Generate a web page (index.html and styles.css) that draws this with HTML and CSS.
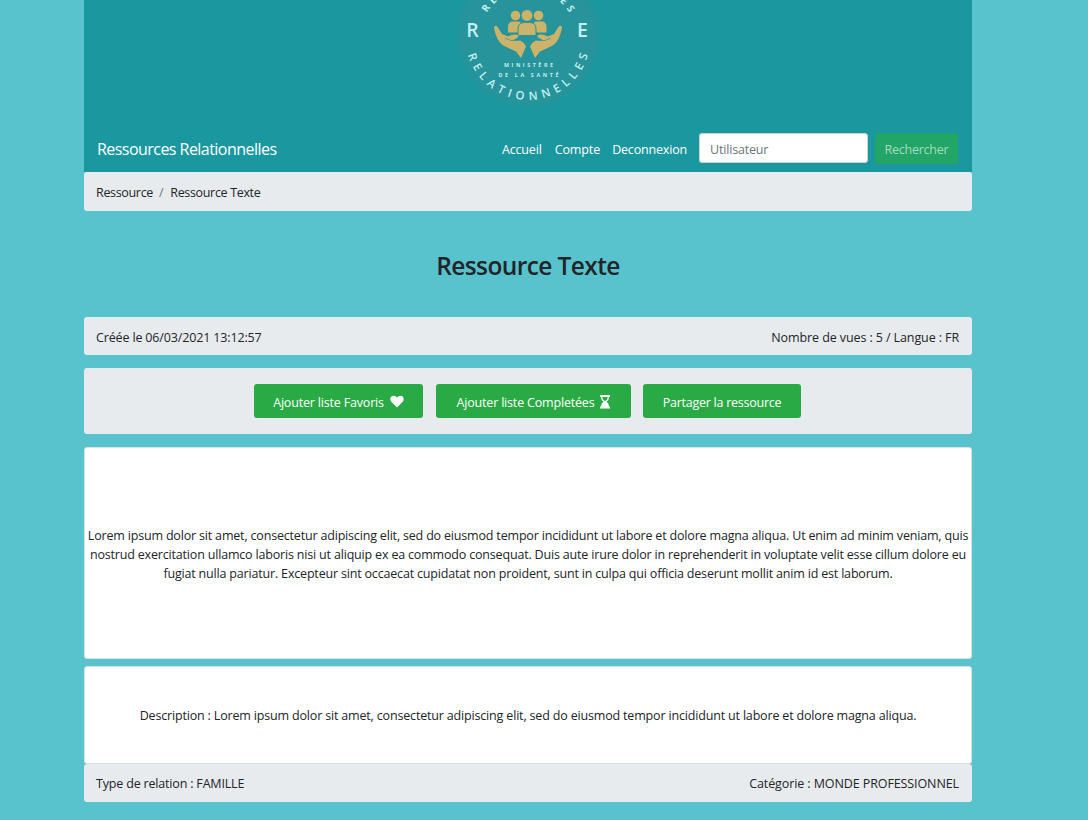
FILE: index.html
```html
<!DOCTYPE html>
<html lang="fr">
<head>
<meta charset="utf-8">
<title>Ressources Relationnelles</title>
<link rel="stylesheet" href="styles.css">
</head>
<body>
<div class="container">
  <header class="header">
    <svg class="logo" viewBox="448 0 160 125" width="160" height="125">
      <defs>
        <path id="arc-top" d="M480 37.5A48 48 0 0 1 576 37.5"/>
        <path id="arc-bottom" d="M465.5 37.5A62.5 62.5 0 0 0 590.5 37.5"/>
        <radialGradient id="disc"><stop offset=".9" stop-color="#27939a"/><stop offset="1" stop-color="#27939a" stop-opacity="0"/></radialGradient>
      </defs>
      <circle cx="528" cy="36" r="74" fill="url(#disc)"/>
      <g class="logo-text">
        <text class="ring ring-top"><textPath href="#arc-top" startOffset="50%" textLength="99">RESSOURCES</textPath></text>
        <text class="ring"><textPath href="#arc-bottom" startOffset="50%" textLength="161">RELATIONNELLES</textPath></text>
        <text class="initial" x="472.5" y="37">R</text>
        <text class="initial" x="582.5" y="37">E</text>
        <text class="small" x="528.5" y="67" textLength="49">MINISTÈRE</text>
        <text class="small" x="528.5" y="77" textLength="60">DE LA SANTÉ</text>
      </g>
      <g fill="#cbb469">
        <circle cx="515.5" cy="15.500" r="4.800"/>
        <circle cx="538.500" cy="15.500" r="4.800"/>
        <path d="M508 32.500V27q0-5.500 5-5.500h5q3 0 3 3l-3 8zM546.500 32.500V27q0-5.500-5-5.500h-5q-3 0-3 3l3 8z"/>
        <g stroke="#27939a"><circle cx="527" cy="15.500" r="5.900"/><path d="M518 35.500V29q0-6.500 6.500-6.500h5q6.500 0 6.500 6.500v6.500z"/></g>
        <path id="hand" d="M494 27Q495.500 24.500 498 27.500L502 34L508 36.500Q514 33.500 518 35Q519.500 37 516 38.500L512.500 40.500L520 40.500Q524 42 526 46.500L521 58L516 51.500L505.500 46.500Q496.500 43 494 27z"/>
        <use href="#hand" transform="matrix(-1 0 0 1 1056 0)"/>
        <path d="M505 38L511 40.500L519 40.500M551 38L545 40.500L537 40.500" fill="none" stroke="#27939a" stroke-width=".7"/>
      </g>
    </svg>
    <nav class="navbar">
      <a class="brand">Ressources Relationnelles</a>
      <a class="link accueil">Accueil</a>
      <a class="link compte">Compte</a>
      <a class="link deconnexion">Deconnexion</a>
      <input class="search" type="text" placeholder="Utilisateur">
      <button class="search-button">Rechercher</button>
    </nav>
  </header>
  <div class="bar breadcrumb"><span class="crumb">Ressource</span><span class="slash">/</span><span class="crumb-current">Ressource Texte</span></div>
  <h1 class="title"><span>Ressource Texte</span></h1>
  <div class="bar info"><span class="created">Créée le 06/03/2021 13:12:57</span><span class="views">Nombre de vues : 5 / Langue : FR</span></div>
  <div class="actions">
    <button class="action favoris"><span>Ajouter liste Favoris</span>
      <svg width="14" height="13" viewBox="0 0 14 13"><path fill="#fff" d="M7 12.500L1.300 6.800C-.6 4.600.2.700 3.600.700 5.300.700 6.300 1.600 7 2.700 7.700 1.600 8.700.700 10.400.700c3.400 0 4.200 3.900 2.300 6.100z"/></svg>
    </button>
    <button class="action completees"><span>Ajouter liste Completées</span>
      <svg class="hourglass" width="10" height="14" viewBox="0 0 10 14"><path fill="#fff" fill-rule="evenodd" d="M0 0H10V2H9Q9 5.500 6.500 6.800Q9 8.200 9 11.500H10V13.500H0V11.500H1Q1 8.200 3.500 6.800Q1 5.500 1 2H0zM2.300 2Q2.400 4.800 4 5.800H6Q7.600 4.800 7.700 2z"/></svg>
    </button>
    <button class="action partager"><span>Partager la ressource</span></button>
  </div>
  <div class="card content">
    <p class="line line-one">Lorem ipsum dolor sit amet, consectetur adipiscing elit, sed do eiusmod tempor incididunt ut labore et dolore magna aliqua. Ut enim ad minim veniam, quis</p>
    <p class="line line-two">nostrud exercitation ullamco laboris nisi ut aliquip ex ea commodo consequat. Duis aute irure dolor in reprehenderit in voluptate velit esse cillum dolore eu</p>
    <p class="line line-three">fugiat nulla pariatur. Excepteur sint occaecat cupidatat non proident, sunt in culpa qui officia deserunt mollit anim id est laborum.</p>
  </div>
  <div class="card description">
    <p class="line line-desc">Description : Lorem ipsum dolor sit amet, consectetur adipiscing elit, sed do eiusmod tempor incididunt ut labore et dolore magna aliqua.</p>
  </div>
  <div class="bar footer"><span class="relation">Type de relation : FAMILLE</span><span class="category">Catégorie : MONDE PROFESSIONNEL</span></div>
</div>
</body>
</html>
```
FILE: styles.css
```css
* { box-sizing: border-box; }
body {
  margin: 0;
  background: #58c3cc;
  color: #212529;
  font: 12.5px/19px "Open Sans", "Noto Sans", sans-serif;
  letter-spacing: -0.18px;
}
.container { width: 888px; margin-left: 84px; }
.header { height: 172px; background: #1a979f; }
.logo { display: block; margin-left: 364px; }
.logo-text { fill: #c0f0f0; text-anchor: middle; letter-spacing: 0; font-family: "Open Sans", sans-serif; }
.ring { font-size: 11.5px; font-weight: 600; }
.ring-top { font-size: 10px; font-weight: 700; }
.initial { font-size: 19.5px; font-weight: 600; }
.small { font-size: 5.4px; font-weight: 700; }
.navbar { display: flex; align-items: center; height: 47px; padding: 1px 14px 0 13px; color: #fff; }
.brand { font-size: 16px; letter-spacing: -0.54px; margin-right: auto; }
.link { white-space: nowrap; margin-right: 12px; }
.accueil { margin-right: 13px; }
.compte { letter-spacing: -0.1px; }
.search {
  width: 169px; height: 30px; padding: 2px 10px 0; border: 1px solid #ced4da; border-radius: 3px;
  font: inherit; letter-spacing: inherit; margin: -2px 7px 0 0;
}
.search::placeholder { color: #6c757d; opacity: 1; }
.search-button {
  width: 83px; height: 31px; margin-top: -2px; padding: 2px 0 0; border: 0; border-radius: 3px;
  background: #22a566; color: #a4dcc0; font: inherit; letter-spacing: -0.25px;
}
.bar {
  display: flex; justify-content: space-between; align-items: center;
  height: 38px; padding: 3px 13px 0 12px; border-radius: 3px; background: #e8ebee; white-space: nowrap;
}
.breadcrumb { height: 39px; justify-content: flex-start; padding-top: 1px; letter-spacing: -0.33px; }
.footer { padding-top: 1px; }
.created { letter-spacing: -0.15px; }
.views, .category { letter-spacing: -0.1px; }
.slash { color: #6c757d; margin: 0 7px 0 6px; }
.title { margin: 38px 0 34px; font-size: 24.5px; line-height: 34px; font-weight: 600; text-align: center; letter-spacing: -0.6px; }
.actions {
  display: flex; margin: 13px 0; height: 66px; padding: 16px 170px 0;
  background: #e8ebee; border-radius: 3px;
}
.action {
  display: flex; align-items: center; justify-content: center; gap: 6px; height: 34px; padding: 0;
  border: 0; border-radius: 3px; background: #2aaa45; color: #fff;
  font: inherit; letter-spacing: inherit; white-space: nowrap;
}
.action span { padding-top: 2px; }
.hourglass { margin-top: 1px; }
.favoris { width: 169px; margin-right: 13px; }
.completees { width: 195px; margin-right: 12px; }
.partager { width: 158px; letter-spacing: -0.25px; }
.card {
  display: flex; flex-direction: column; align-items: center; justify-content: center;
  background: #fff; border: 1px solid #d4e3e5; border-radius: 3px;
}
.content { height: 212px; padding-top: 3px; margin-bottom: 7px; }
.description { height: 98px; padding-top: 1px; }
.line { margin: 0; white-space: nowrap; }
.line-desc { letter-spacing: -0.17px; }
```
